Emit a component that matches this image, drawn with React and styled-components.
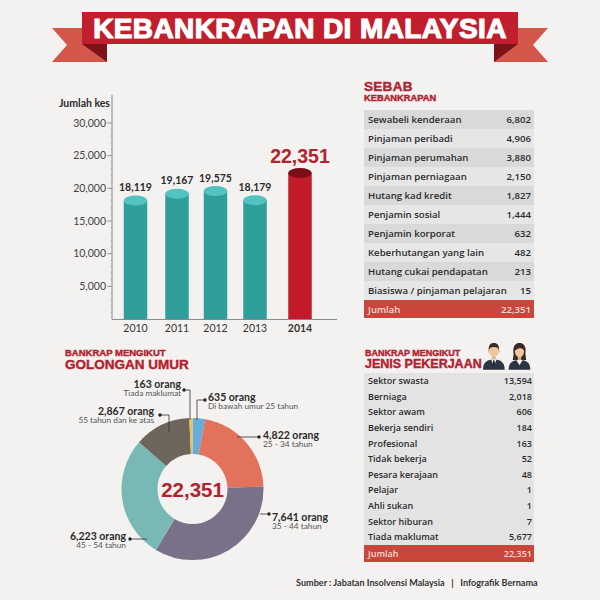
import React from "react";
import styled, { createGlobalStyle } from "styled-components";

const Global = createGlobalStyle`
  html, body { margin: 0; padding: 0; background: #f3f2f0; }
  body { font-family: "Open Sans", Lato, sans-serif; color: #2e2e2e; }
`;

const Page = styled.div`
  width: 600px;
  height: 600px;
  overflow: hidden;
  display: flex;
  flex-direction: column;
  background: #f3f2f0;
`;

const Banner = styled.header`
  display: flex;
  align-items: flex-start;
  height: 50px;
  margin: 12px 0 0 52px;
`;

const Tail = styled.svg`
  flex: none;
  width: ${(p) => p.$w}px;
  height: 50px;
  margin: ${(p) => (p.$side === "left" ? "0 -25px 0 0" : "0 0 0 -24px")};
`;

const TitleBox = styled.div`
  position: relative;
  z-index: 1;
  width: 436px;
  height: 32px;
  background: #c21f2e;
  display: flex;
  align-items: center;
  justify-content: center;
`;

const Title = styled.h1`
  margin: 0;
  font-family: "Liberation Sans", Arial, sans-serif;
  font-weight: 700;
  font-size: 28px;
  line-height: 32px;
  letter-spacing: 0.4px;
  color: #fff;
  -webkit-text-stroke: 1.2px #fff;
  padding-top: 1px;
`;

const Content = styled.main`
  display: grid;
  grid-template-columns: 300px 170px;
  grid-template-rows: 258px 232px;
  column-gap: 14px;
  margin: 18px 0 0 50px;
`;

const Block = styled.section`
  display: flex;
  flex-direction: column;
  padding-left: ${(p) => p.$indent || 0}px;
  padding-top: ${(p) => p.$top || 0}px;
`;

const ChartHolder = styled.div`
  margin-left: -15px;
`;

const Heading = styled.div`
  font-family: "Liberation Sans", Arial, sans-serif;
  font-weight: 700;
  color: #b3202e;
  font-size: ${(p) => p.$size}px;
  line-height: ${(p) => p.$lh}px;
  letter-spacing: ${(p) => p.$ls || 0}px;
  -webkit-text-stroke: 0.4px #b3202e;
  white-space: nowrap;
`;

const Table = styled.div`
  display: flex;
  flex-direction: column;
  margin-top: ${(p) => p.$mt || 0}px;
`;

const Row = styled.div`
  display: flex;
  justify-content: space-between;
  align-items: center;
  height: ${(p) => p.$h}px;
  padding: 0 ${(p) => p.$pr}px 0 4px;
  background: ${(p) => p.$bg};
  font-family: "Open Sans", Lato, sans-serif;
  font-size: ${(p) => p.$fs}px;
  font-weight: 600;
  color: #2b2b2b;
  white-space: nowrap;
`;

const TotalRow = styled(Row)`
  background: #c9463d;
  color: #f8dad5;
`;

const JobHeader = styled.div`
  display: flex;
  justify-content: space-between;
  align-items: flex-start;
  height: 30px;
  margin-bottom: 5px;
`;

const TitleStack = styled.div`
  display: flex;
  flex-direction: column;
  padding: 10px 0 0 1px;
`;

const People = styled.svg`
  width: 52px;
  height: 30px;
  margin: 2px 1px 0 0;
`;

const Chart = styled.svg`
  display: block;
  text {
    font-family: Lato, "Open Sans", sans-serif;
  }
`;

const Footer = styled.footer`
  margin: 7px 0 0 296px;
  font-family: Lato, "Open Sans", sans-serif;
  font-size: 9.1px;
  line-height: 12px;
  font-weight: 700;
  color: #333;
  white-space: pre;
`;

const causes = [
  ["Sewabeli kenderaan", "6,802"],
  ["Pinjaman peribadi", "4,906"],
  ["Pinjaman perumahan", "3,880"],
  ["Pinjaman perniagaan", "2,150"],
  ["Hutang kad kredit", "1,827"],
  ["Penjamin sosial", "1,444"],
  ["Penjamin korporat", "632"],
  ["Keberhutangan yang lain", "482"],
  ["Hutang cukai pendapatan", "213"],
  ["Biasiswa / pinjaman pelajaran", "15"],
];

const jobs = [
  ["Sektor swasta", "13,594"],
  ["Berniaga", "2,018"],
  ["Sektor awam", "606"],
  ["Bekerja sendiri", "184"],
  ["Profesional", "163"],
  ["Tidak bekerja", "52"],
  ["Pesara kerajaan", "48"],
  ["Pelajar", "1"],
  ["Ahli sukan", "1"],
  ["Sektor hiburan", "7"],
  ["Tiada maklumat", "5,677"],
];

const bars = [
  { year: "2010", value: 18119, label: "18,119", cx: 85.5 },
  { year: "2011", value: 19167, label: "19,167", cx: 127 },
  { year: "2012", value: 19575, label: "19,575", cx: 165.5 },
  { year: "2013", value: 18179, label: "18,179", cx: 205 },
  { year: "2014", value: 22351, label: "22,351", cx: 250, hi: true },
];

const yOf = (v) => 239 - (v * 196) / 30000;

function BarChart() {
  const ticks = [5000, 10000, 15000, 20000, 25000, 30000];
  const minor = [];
  for (let v = 1000; v <= 30000; v += 1000) if (v % 5000) minor.push(v);
  const w = 23.5;
  return (
    <Chart width="300" height="258" viewBox="0 0 300 258">
      <text x="60" y="27" textAnchor="end" fontSize="10.5" fontWeight="700" fill="#2b2b2b">
        Jumlah kes
      </text>
      {minor.map((v) => (
        <line key={v} x1="60" x2="62" y1={yOf(v)} y2={yOf(v)} stroke="#c8c8c8" strokeWidth="0.8" />
      ))}
      {ticks.map((v) => (
        <g key={v}>
          <line x1="57.5" x2="62" y1={yOf(v)} y2={yOf(v)} stroke="#888" strokeWidth="0.9" />
          <text x="56" y={yOf(v) + 3.6} textAnchor="end" fontSize="10.5" fill="#444">
            {v.toLocaleString("en-US")}
          </text>
        </g>
      ))}
      <line x1="62" x2="62" y1="15" y2="239.5" stroke="#8a8a8a" strokeWidth="1" />
      <line x1="62" x2="287" y1="239.5" y2="239.5" stroke="#8a8a8a" strokeWidth="1" />
      {bars.map((b) => {
        const top = yOf(b.value);
        return (
          <g key={b.year}>
            <rect x={b.cx - w / 2} y={top} width={w} height={239 - top} fill={b.hi ? "#c21c2b" : "#2f9f9b"} />
            <ellipse cx={b.cx} cy={top} rx={w / 2} ry="5" fill={b.hi ? "#7c0f16" : "#52c3c1"} />
            {b.hi ? (
              <text
                x={b.cx}
                y={top - 10}
                textAnchor="middle"
                fontSize="19.5"
                fontWeight="700"
                fill="#b3222d"
                style={{ fontFamily: '"Liberation Sans", Arial, sans-serif' }}
              >
                {b.label}
              </text>
            ) : (
              <text x={b.cx} y={top - 9.5} textAnchor="middle" fontSize="10.5" fontWeight="700" fill="#2b2b2b">
                {b.label}
              </text>
            )}
            <text
              x={b.cx}
              y="252"
              textAnchor="middle"
              fontSize="10.5"
              fontWeight={b.hi ? 700 : 400}
              fill="#333"
            >
              {b.year}
            </text>
          </g>
        );
      })}
    </Chart>
  );
}

const TOTAL = 22351;
const slices = [
  { v: 635, c: "#66acd9" },
  { v: 4822, c: "#e2725c" },
  { v: 7641, c: "#7a7088" },
  { v: 6223, c: "#79b9b5" },
  { v: 2867, c: "#6e655c" },
  { v: 163, c: "#e9c15e" },
];

function arcPath(cx, cy, r0, r1, a0, a1) {
  const p = (r, a) => [cx + r * Math.sin((a * Math.PI) / 180), cy - r * Math.cos((a * Math.PI) / 180)];
  const large = a1 - a0 > 180 ? 1 : 0;
  const [x0, y0] = p(r1, a0);
  const [x1, y1] = p(r1, a1);
  const [x2, y2] = p(r0, a1);
  const [x3, y3] = p(r0, a0);
  return `M${x0} ${y0} A${r1} ${r1} 0 ${large} 1 ${x1} ${y1} L${x2} ${y2} A${r0} ${r0} 0 ${large} 0 ${x3} ${y3} Z`;
}

const labels = [
  { x: 131, y: 15.5, anchor: "end", big: "163 orang", small: "Tiada maklumat", dot: [134, 18], line: "134,18 140,18 140,48" },
  { x: 158, y: 28.5, anchor: "start", big: "635 orang", small: "Di bawah umur 25 tahun", dot: [155, 28], line: "155,28 147,28 147,48" },
  { x: 104, y: 42.5, anchor: "end", big: "2,867 orang", small: "55 tahun dan ke atas", dot: [110, 43], line: "110,43 119,43 119,60" },
  { x: 213, y: 66.5, anchor: "start", big: "4,822 orang", small: "25 - 34 tahun", dot: [209, 65], line: "209,65 187,65" },
  { x: 222, y: 148.5, anchor: "start", big: "7,641 orang", small: "35 - 44 tahun", dot: [219, 142], line: "219,142 210,142" },
  { x: 76, y: 167.5, anchor: "end", big: "6,223 orang", small: "45 - 54 tahun", dot: [80, 167], line: "80,167 97,167" },
];

function Donut() {
  const cx = 142.5;
  const cy = 117;
  let a = 0;
  const arcs = slices.map((s) => {
    const a0 = a;
    const a1 = a + (s.v / TOTAL) * 360;
    a = a1;
    return <path key={s.v} d={arcPath(cx, cy, 35, 71, a0, a1)} fill={s.c} />;
  });
  return (
    <Chart width="300" height="198" viewBox="0 0 300 198">
      {arcs}
      <text
        x={cx}
        y={cy + 7.5}
        textAnchor="middle"
        fontSize="20.5"
        fontWeight="700"
        fill="#b3222d"
        style={{ fontFamily: '"Liberation Sans", Arial, sans-serif' }}
      >
        22,351
      </text>
      {labels.map((l) => (
        <g key={l.big}>
          <polyline points={l.line} fill="none" stroke="#333" strokeWidth="0.8" />
          <circle cx={l.dot[0]} cy={l.dot[1]} r="1.7" fill="#222" />
          <text x={l.x} y={l.y} textAnchor={l.anchor} fontSize="10.5" fontWeight="700" fill="#2b2b2b">
            {l.big}
          </text>
          <text x={l.x} y={l.y + 8.5} textAnchor={l.anchor} fontSize="8.3" fill="#555">
            {l.small}
          </text>
        </g>
      ))}
    </Chart>
  );
}

function PeopleIcon() {
  return (
    <People viewBox="0 0 52 30">
      <path d="M1 30 C1 22.5 5 19.5 12 19.5 C19 19.5 23 22.5 23 30 Z" fill="#2c3542" />
      <rect x="10.1" y="15" width="3.8" height="5" fill="#e3b08c" />
      <polygon points="9.3,19.6 14.7,19.6 12,26.5" fill="#fff" />
      <polygon points="11.3,20.4 12.7,20.4 13.2,24.8 12,27 10.8,24.8" fill="#1a222d" />
      <ellipse cx="6.9" cy="11.2" rx="1" ry="1.6" fill="#eab993" />
      <ellipse cx="17.1" cy="11.2" rx="1" ry="1.6" fill="#eab993" />
      <ellipse cx="12" cy="11" rx="5" ry="6" fill="#f2c6a0" />
      <path d="M6.9 10.5 C6.3 4.5 9 2.8 12.2 2.8 C15.6 2.8 17.8 4.8 17.1 10.5 C16.6 7.8 15.2 6.8 12 6.8 C9 6.8 7.6 7.8 6.9 10.5 Z" fill="#3b2e28" />
      <path d="M32 14 C30.8 5 34.3 2.8 38 2.8 C41.7 2.8 45.2 5 44 14 L44.8 20 L31.2 20 Z" fill="#3a2a24" />
      <path d="M27 30 C27 22.5 31 20 38 20 C45 20 49 22.5 49 30 Z" fill="#2c3542" />
      <rect x="36.3" y="15" width="3.4" height="5.5" fill="#e3b08c" />
      <polygon points="34.8,20 41.2,20 38,25.5" fill="#fff" />
      <ellipse cx="38" cy="11.5" rx="4.6" ry="5.6" fill="#f2c6a0" />
      <path d="M33.3 10.5 C33.3 6 35.8 4.8 38 4.8 C40.6 4.8 42.8 6.3 42.7 10.5 C41.2 8.2 39.5 7.6 37 8.4 C35.6 8.9 34.3 9.6 33.3 10.5 Z" fill="#3a2a24" />
    </People>
  );
}

function LeftTail() {
  return (
    <Tail $side="left" $w={55} viewBox="0 0 55 50">
      <polygon points="0,16 55,16 55,50 0,50 15,33" fill="#d4574c" />
      <polygon points="30,32 55,32 55,50" fill="#7d1218" />
    </Tail>
  );
}

function RightTail() {
  return (
    <Tail $side="right" $w={54} viewBox="0 0 54 50">
      <polygon points="54,16 0,16 0,50 54,50 39,33" fill="#d4574c" />
      <polygon points="24,32 0,32 0,50" fill="#7d1218" />
    </Tail>
  );
}

export default function App() {
  return (
    <Page>
      <Global />
      <Banner>
        <LeftTail />
        <TitleBox>
          <Title>KEBANKRAPAN DI MALAYSIA</Title>
        </TitleBox>
        <RightTail />
      </Banner>

      <Content>
        <BarChart />

        <Block>
          <Heading $size={13.5} $lh={13} $ls={0.3}>SEBAB</Heading>
          <Heading $size={9.3} $lh={10}>KEBANKRAPAN</Heading>
          <Table $mt={7}>
            {causes.map(([k, v], i) => (
              <Row key={k} $h={19} $pr={3} $fs={9.6} $bg={i % 2 === 0 ? "#d9d9d9" : "#e6e6e6"}>
                <span>{k}</span>
                <span>{v}</span>
              </Row>
            ))}
            <TotalRow $h={18} $pr={3} $fs={9.6}>
              <span>Jumlah</span>
              <span>22,351</span>
            </TotalRow>
          </Table>
        </Block>

        <Block $indent={15} $top={10}>
          <Heading $size={9.5} $lh={10}>BANKRAP MENGIKUT</Heading>
          <Heading $size={13.5} $lh={14}>GOLONGAN UMUR</Heading>
          <ChartHolder>
            <Donut />
          </ChartHolder>
        </Block>

        <Block>
          <JobHeader>
            <TitleStack>
              <Heading $size={9} $lh={10}>BANKRAP MENGIKUT</Heading>
              <Heading $size={12.5} $lh={13}>JENIS PEKERJAAN</Heading>
            </TitleStack>
            <PeopleIcon />
          </JobHeader>
          <Table>
            {jobs.map(([k, v]) => (
              <Row key={k} $h={15.6} $pr={2} $fs={9} $bg="#e3e3e3">
                <span>{k}</span>
                <span>{v}</span>
              </Row>
            ))}
            <TotalRow $h={17.5} $pr={2} $fs={9}>
              <span>Jumlah</span>
              <span>22,351</span>
            </TotalRow>
          </Table>
        </Block>
      </Content>

      <Footer>{"Sumber : Jabatan Insolvensi Malaysia   |   Infografik Bernama"}</Footer>
    </Page>
  );
}
